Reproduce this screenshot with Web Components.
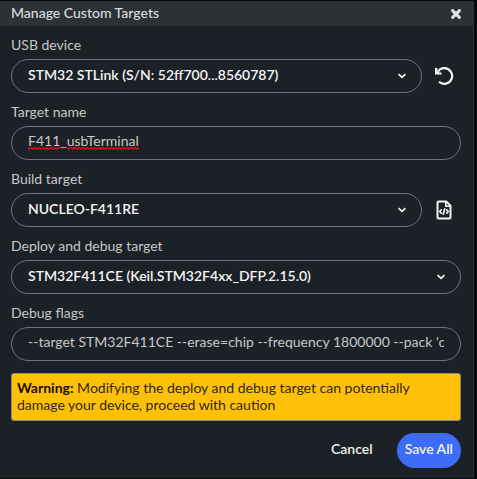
<!DOCTYPE html>
<html lang="en">
<head>
<meta charset="utf-8">
<title>Manage Custom Targets</title>
<style>
  html { background: #06090c; }
  body { margin: 0; padding: 1px 3px 1px 0; font: 14px/17px Lato, sans-serif; color: #c8c8c8; }
</style>
</head>
<body>
<target-dialog heading="Manage Custom Targets">
  <form-field label="USB device" kind="select" value="STM32 STLink (S/N: 52ff700...8560787)">
    <icon-button slot="action" icon="undo" label="Refresh devices"></icon-button>
  </form-field>
  <form-field label="Target name" kind="text" value="F411_usbTerminal" misspelt></form-field>
  <form-field label="Build target" kind="select" value="NUCLEO-F411RE">
    <icon-button slot="action" icon="file" label="Open target file"></icon-button>
  </form-field>
  <form-field label="Deploy and debug target" kind="select" value="STM32F411CE (Keil.STM32F4xx_DFP.2.15.0)"></form-field>
  <form-field label="Debug flags" kind="text" value="--target STM32F411CE --erase=chip --frequency 1800000 --pack 'c"></form-field>
  <warning-note><strong>Warning:</strong> Modifying the deploy and debug target can potentially damage your device, proceed with caution</warning-note>
  <pill-button slot="actions">Cancel</pill-button>
  <pill-button slot="actions" primary>Save All</pill-button>
</target-dialog>
<script>
const icons = {
  close: `<svg width="12" height="12" viewBox="0 0 12 12"><path d="M2.6 2.6 9.4 9.4M9.4 2.6 2.6 9.4" fill="none" stroke="#e4e4e4" stroke-width="3" stroke-linecap="round"/></svg>`,
  undo: `<svg width="20" height="20" viewBox="0 0 20 20"><path d="M4.200 5.600C5.500 3.400 7.700 2.200 10.300 2.200a7.800 7.800 0 1 1-5.300 13.500" fill="none" stroke="#f5f5f5" stroke-width="2.200"/><path d="M1 2v6.500h6.600V6.600H5.200L3.400 5V2z" fill="#f5f5f5"/></svg>`,
  file: `<svg width="16" height="20" viewBox="0 0 16 20"><path d="M2.500 1.500h7.700l4.300 4.300v11.700a1 1 0 0 1-1 1h-11a1 1 0 0 1-1-1v-15a1 1 0 0 1 1-1z" fill="none" stroke="#f2f2f2" stroke-width="2" stroke-linejoin="round"/><path d="M9.800 1.500v4.700h4.700" fill="none" stroke="#f2f2f2" stroke-width="1.600"/><path d="M5.700 9.200 3.800 11.500l1.900 2.300M10.300 9.200l1.900 2.300-1.900 2.300M8.900 8.200 7.100 14.800" fill="none" stroke="#f2f2f2" stroke-width="1.700"/></svg>`,
  chevron: `<svg width="10" height="8" viewBox="0 0 10 8"><path d="M1.600 2.100 5 5.300 8.400 2.100" fill="none" stroke="#f5f5f5" stroke-width="1.700"/></svg>`
};

customElements.define('icon-button', class extends HTMLElement {
  connectedCallback() {
    this.attachShadow({ mode: 'open' }).innerHTML = `
      <style>
        :host { display: flex; }
        button { display: flex; align-items: center; justify-content: center; min-width: 12px; padding: 0; border: 0; background: none; cursor: pointer; }
        svg { display: block; }
      </style>
      <button type="button" aria-label="${this.getAttribute('label')}">${icons[this.getAttribute('icon')]}</button>`;
  }
});

customElements.define('form-field', class extends HTMLElement {
  connectedCallback() {
    const value = this.getAttribute('value');
    const control = this.getAttribute('kind') === 'select'
      ? `<select id="control"><option>${value}</option></select><span class="chevron">${icons.chevron}</span>`
      : `<input id="control" type="text" spellcheck="false">`;
    const squiggle = this.hasAttribute('misspelt')
      ? `<svg class="squiggle" width="111" height="3" aria-hidden="true"><defs><pattern id="wave" width="4" height="3" patternUnits="userSpaceOnUse"><path d="M-1 0 1 2.200 3 .6 5 2.200" fill="none" stroke="#e80c0c" stroke-width="1.300"/></pattern></defs><rect width="32" height="3" fill="url(#wave)"/><rect x="39" width="72" height="3" fill="url(#wave)"/></svg>`
      : '';
    this.attachShadow({ mode: 'open' }).innerHTML = `
      <style>
        :host { display: flex; flex-direction: column; gap: 6px; }
        .row { display: flex; align-items: center; }
        .box { flex: 1; min-width: 0; display: grid; align-items: center; }
        .box > * { grid-area: 1 / 1; }
        select, input {
          box-sizing: border-box; width: 100%; min-width: 0; height: 34px; margin: 0;
          padding: 0 16px 4px; border: 1px solid #70747b; border-radius: 17px;
          background: #1c2027; color: #c8c8c8; font: inherit; appearance: none; outline: 0;
        }
        select { color: #f5f5f5; font-weight: 600; padding-right: 36px; }
        input { padding-bottom: 6px; }
        .squiggle { margin-left: 17px; align-self: end; margin-bottom: 10px; pointer-events: none; }
        .chevron { justify-self: end; margin-right: 15px; pointer-events: none; }
        .chevron svg { display: block; }
        ::slotted(*) { width: 39px; justify-content: center; padding-left: 5px; box-sizing: border-box; }
      </style>
      <label for="control">${this.getAttribute('label')}</label>
      <div class="row"><div class="box">${control}${squiggle}</div><slot name="action"></slot></div>`;
    const input = this.shadowRoot.querySelector('input');
    if (input) input.value = value;
  }
});

customElements.define('warning-note', class extends HTMLElement {
  connectedCallback() {
    this.attachShadow({ mode: 'open' }).innerHTML = `
      <style>
        :host { display: block; margin-top: 2px; padding: 5px 5px 7px; border: 1px solid #8d8a79; border-radius: 3px; background: #ffc008; color: #302815; }
        ::slotted(strong) { color: #171200; font-weight: 700; }
      </style>
      <slot></slot>`;
  }
});

customElements.define('pill-button', class extends HTMLElement {
  connectedCallback() {
    this.attachShadow({ mode: 'open' }).innerHTML = `
      <style>
        :host { display: block; }
        button { height: 35px; padding: 0 8px 4px; border: 0; border-radius: 18px; background: none; color: #f2f2f2; font: inherit; font-weight: 600; cursor: pointer; }
        :host([primary]) button { background: #3d6df8; }
      </style>
      <button type="button"><slot></slot></button>`;
  }
});

customElements.define('target-dialog', class extends HTMLElement {
  connectedCallback() {
    this.attachShadow({ mode: 'open' }).innerHTML = `
      <style>
        :host { display: block; border-right: 1px solid #2b3036; background: #1c2027; }
        header { display: flex; align-items: center; justify-content: space-between; height: 25px; padding: 0 11px; background: #2b3135; color: #dcdcdc; }
        h1 { margin: 0; padding-bottom: 2px; font: inherit; font-weight: 500; }
        main { display: flex; flex-direction: column; gap: 10px; padding: 10px 12px 10px 11px; }
        footer { display: flex; justify-content: flex-end; gap: 16px; margin-top: 2px; }
      </style>
      <header><h1>${this.getAttribute('heading')}</h1><icon-button icon="close" label="Close"></icon-button></header>
      <main><slot></slot><footer><slot name="actions"></slot></footer></main>`;
  }
});
</script>
</body>
</html>
